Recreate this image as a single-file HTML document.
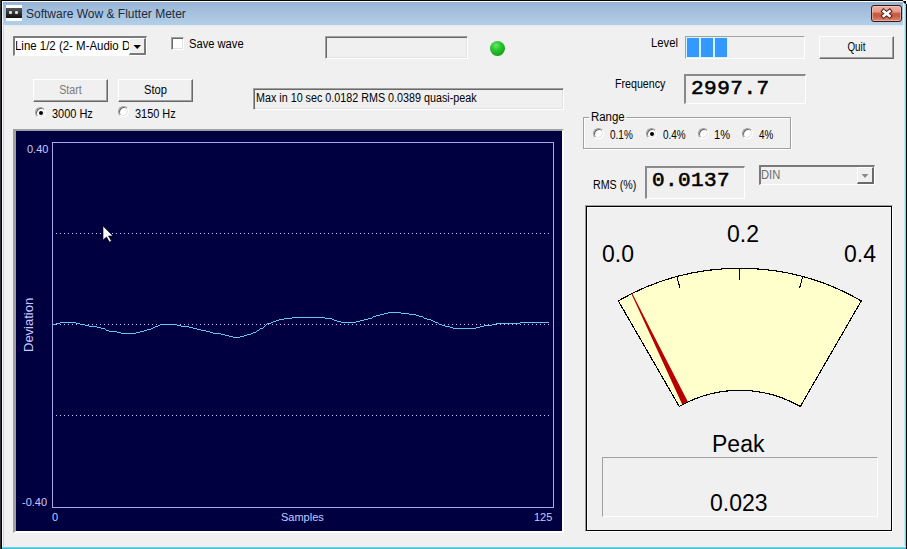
<!DOCTYPE html>
<html><head><meta charset="utf-8">
<style>
*{box-sizing:border-box;margin:0;padding:0}
html,body{width:907px;height:549px;overflow:hidden;background:#f0f0f0}
body{position:relative;font-family:"Liberation Sans",sans-serif;font-size:11px;color:#000}
.a{position:absolute}
.t{position:absolute;white-space:nowrap;line-height:1}
.sunk{position:absolute;border-top:1px solid #a0a0a0;border-left:1px solid #a0a0a0;border-bottom:1px solid #fff;border-right:1px solid #fff}
.sunk2{position:absolute;border-top:1px solid #a0a0a0;border-left:1px solid #a0a0a0;border-bottom:1px solid #fff;border-right:1px solid #fff;box-shadow:inset 1px 1px 0 #696969,inset -1px -1px 0 #e3e3e3}
.btn{position:absolute;width:75px;height:23px;background:#f0f0f0;border-top:1px solid #fff;border-left:1px solid #fff;border-right:1px solid #696969;border-bottom:1px solid #696969;box-shadow:inset -1px -1px 0 #a0a0a0}
.btn span{position:absolute;left:0;right:0;text-align:center;top:4px;line-height:1}
.radio{position:absolute;width:11px;height:11px;border-radius:50%;background:#fff;border:1px solid;border-color:#a0a0a0 #fff #fff #a0a0a0;box-shadow:inset 1px 1px 0 #696969, inset -1px -1px 0 #e3e3e3}
.radio.on::after{content:"";position:absolute;left:3px;top:3px;width:4px;height:4px;border-radius:50%;background:#000}
</style></head><body>
<!-- window frame -->
<div class="a" style="left:0;top:0;width:907px;height:1px;background:#000"></div>
<div class="a" style="left:0;top:0;width:1px;height:549px;background:#333"></div>
<div class="a" style="left:1px;top:0;width:1px;height:549px;background:#000"></div>
<div class="a" style="left:2px;top:1px;width:1px;height:548px;background:#f4faff"></div>
<div class="a" style="left:3px;top:25px;width:1px;height:524px;background:#c8d4e4"></div>
<div class="a" style="left:2px;top:1px;width:903px;height:1px;background:#fff"></div>
<div class="a" style="left:3px;top:2px;width:900px;height:23px;background:linear-gradient(180deg,#97b3d3 0,#a0bcdb 6px,#b2cde6 22px,#b6d2ea 23px)"></div>
<div class="a" style="left:3px;top:25px;width:900px;height:1px;background:#e2ebf5"></div><div class="a" style="left:4px;top:26px;width:899px;height:1px;background:#ebeff4"></div>
<div class="a" style="left:903px;top:1px;width:1px;height:548px;background:#e6f4fa"></div>
<div class="a" style="left:904px;top:1px;width:1px;height:548px;background:#c0e8f8"></div>
<div class="a" style="left:905px;top:1px;width:1px;height:548px;background:#8ccfe8"></div>
<div class="a" style="left:906px;top:0;width:1px;height:549px;background:#000"></div>
<div class="a" style="left:2px;top:546px;width:904px;height:1px;background:#e8f0f8"></div>
<div class="a" style="left:2px;top:547px;width:904px;height:1px;background:#80cce0"></div>
<div class="a" style="left:2px;top:548px;width:904px;height:1px;background:#3cc0d8"></div>
<div class="a" style="left:903px;top:0;width:4px;height:4px;background:#000;border-radius:0 0 0 4px;box-shadow:-1px 1px 0 #fff inset"></div>

<!-- title -->
<div class="a" style="left:6px;top:5px;width:16px;height:16px;background:#fff"></div>
<div class="a" style="left:6px;top:8px;width:16px;height:10px;background:linear-gradient(180deg,#555,#111)"></div>
<div class="a" style="left:9px;top:11px;width:3px;height:3px;background:#ddd;border-radius:1px"></div>
<div class="a" style="left:15px;top:11px;width:3px;height:3px;background:#ddd;border-radius:1px"></div>
<div class="t" style="left:26px;top:8px;font-size:12px;color:#1b2a3c">Software Wow &amp; Flutter Meter</div>

<!-- close button -->
<div class="a" style="left:871px;top:5px;width:31px;height:17px;border:1px solid #3a1814;border-radius:3px;background:linear-gradient(180deg,#eeb0a2 0,#e39a8a 6px,#cf5e48 7px,#c85a42 10px,#dc8870 15px);box-shadow:inset 0 0 0 1px rgba(255,220,210,.45)"></div>
<svg class="a" style="left:871px;top:5px" width="31" height="17"><path d="M12.6 6.2 L18.6 11 M18.6 6.2 L12.6 11" stroke="#4a2018" stroke-width="4.4" stroke-linecap="square"/><path d="M12.6 6.2 L18.6 11 M18.6 6.2 L12.6 11" stroke="#fff" stroke-width="2.5" stroke-linecap="square"/></svg>

<!-- combo -->
<div class="a" style="left:13px;top:36px;width:134px;height:20px;background:#fff;border-top:2px solid #7d7d7d;border-left:2px solid #7d7d7d;border-bottom:1px solid #fff;border-right:1px solid #fff"></div>
<div class="a" style="left:16px;top:41px;width:113px;height:12px;overflow:hidden"><div class="t" style="left:-0.9px;top:-1px;font-size:12px;transform-origin:0 0;transform:scaleX(0.954)">Line 1/2 (2- M-Audio Device</div></div>
<div class="a" style="left:129px;top:38px;width:17px;height:17px;background:#f0f0f0;border-left:1px solid #fff;border-top:1px solid #fff;border-right:2px solid #7a7a7a;border-bottom:2px solid #7a7a7a"></div>
<svg class="a" style="left:129px;top:38px" width="16" height="17"><path d="M4.5 7 L12 7 L8.25 11 Z" fill="#000"/></svg>

<!-- save wave -->
<div class="a" style="left:171px;top:37px;width:13px;height:13px;background:#fff;border-top:1px solid #a0a0a0;border-left:1px solid #a0a0a0;border-bottom:1px solid #fff;border-right:1px solid #fff;box-shadow:inset 1px 1px 0 #696969,inset -1px -1px 0 #e3e3e3"></div>
<div class="t" style="left:189.1px;top:38px;font-size:12px;transform-origin:0 0;transform:scaleX(0.930)">Save wave</div>

<div class="sunk2" style="left:325px;top:36px;width:143px;height:23px"></div>
<!-- LED -->
<div class="a" style="left:490px;top:41px;width:15px;height:15px;border-radius:50%;background:radial-gradient(circle at 40% 30%,#6ee86e 0,#28c830 35%,#14a01c 75%,#087010 100%)"></div>

<!-- Level -->
<div class="t" style="left:651.1px;top:37px;font-size:12px;transform-origin:0 0;transform:scaleX(0.940)">Level</div>
<div class="sunk" style="left:685px;top:36px;width:120px;height:23px"></div>
<div class="a" style="left:687px;top:38px;width:12px;height:19px;background:#3399ff;box-shadow:0 0 0 1px #d4f4ff"></div>
<div class="a" style="left:701px;top:38px;width:12px;height:19px;background:#3399ff;box-shadow:0 0 0 1px #d4f4ff"></div>
<div class="a" style="left:715px;top:38px;width:12px;height:19px;background:#3399ff;box-shadow:0 0 0 1px #d4f4ff"></div>

<div class="btn" style="left:819px;top:36px"><span style="font-size:12px;top:4px;transform:scaleX(0.818)">Quit</span></div>
<div class="btn" style="left:33px;top:79px;color:#7a7a7a"><span style="font-size:12px;top:4px;transform:scaleX(0.892)">Start</span></div>
<div class="btn" style="left:118px;top:79px"><span style="font-size:12px;top:4px;transform:scaleX(0.93)">Stop</span></div>

<div class="radio on" style="left:35px;top:107px"></div>
<div class="t" style="left:51.9px;top:108px;font-size:12px;transform-origin:0 0;transform:scaleX(0.914)">3000 Hz</div>
<div class="radio" style="left:118px;top:106px"></div>
<div class="t" style="left:134.8px;top:108px;font-size:12px;transform-origin:0 0;transform:scaleX(0.909)">3150 Hz</div>

<div class="sunk2" style="left:253px;top:88px;width:311px;height:22px"></div>
<div class="t" style="left:255.7px;top:92px;font-size:12px;transform-origin:0 0;transform:scaleX(0.896)">Max in 10 sec 0.0182 RMS 0.0389 quasi-peak</div>

<!-- frequency -->
<div class="t" style="left:614.7px;top:78px;font-size:12px;transform-origin:0 0;transform:scaleX(0.888)">Frequency</div>
<div class="sunk" style="left:684px;top:74px;width:122px;height:30px;border-top-width:2px;border-left-width:2px;border-top-color:#8a8a8a;border-left-color:#8a8a8a"></div>
<div class="t" style="left:691px;top:78px;font-family:'Liberation Mono',monospace;font-weight:normal;-webkit-text-stroke:0.6px #000;font-size:21px;letter-spacing:0.5px">2997.7</div>

<!-- range -->
<div class="a" style="left:583px;top:117px;width:208px;height:32px;border:1px solid #a0a0a0;box-shadow:1px 1px 0 #fff inset, 1px 1px 0 #fff"></div>
<div class="t" style="left:589.1px;top:111px;background:#f0f0f0;padding:0 2px;font-size:12px;transform-origin:0 0;transform:scaleX(0.956)">Range</div>
<div class="radio" style="left:593px;top:128px"></div><div class="t" style="left:609.5px;top:129px;font-size:12px;transform-origin:0 0;transform:scaleX(0.833)">0.1%</div>
<div class="radio on" style="left:646px;top:128px"></div><div class="t" style="left:662.7px;top:129px;font-size:12px;transform-origin:0 0;transform:scaleX(0.830)">0.4%</div>
<div class="radio" style="left:698px;top:128px"></div><div class="t" style="left:714.1px;top:129px;font-size:12px;transform-origin:0 0;transform:scaleX(0.925)">1%</div>
<div class="radio" style="left:742px;top:128px"></div><div class="t" style="left:758.5px;top:129px;font-size:12px;transform-origin:0 0;transform:scaleX(0.824)">4%</div>

<!-- RMS -->
<div class="t" style="left:593.1px;top:179px;font-size:12px;transform-origin:0 0;transform:scaleX(0.889)">RMS (%)</div>
<div class="sunk" style="left:645px;top:166px;width:100px;height:33px;border-top-width:2px;border-left-width:2px;border-top-color:#8a8a8a;border-left-color:#8a8a8a"></div>
<div class="t" style="left:652px;top:170px;font-family:'Liberation Mono',monospace;font-weight:normal;-webkit-text-stroke:0.6px #000;font-size:21px;letter-spacing:0.4px">0.0137</div>

<!-- DIN combo (disabled) -->
<div class="a" style="left:759px;top:165px;width:116px;height:20px;background:#f0f0f0;border-top:2px solid #7a7a7a;border-left:2px solid #7a7a7a;border-bottom:1px solid #fff;border-right:1px solid #fff;box-shadow:inset 0 0 0 0 #000"></div>
<div class="t" style="left:761.4px;top:169px;color:#6d6d6d;font-size:12px;transform-origin:0 0;transform:scaleX(0.932)">DIN</div>
<div class="a" style="left:857px;top:167px;width:17px;height:17px;background:#f0f0f0;border-left:1px solid #fff;border-top:1px solid #fff;border-right:2px solid #6a6a6a;border-bottom:2px solid #6a6a6a"></div>
<svg class="a" style="left:857px;top:167px" width="16" height="17"><path d="M4.5 7 L11.5 7 L8 11 Z" fill="#8a8a8a"/></svg>

<!-- chart -->
<div class="a" style="left:13px;top:129px;width:551px;height:404px;border-top:2px solid #a0a0a0;border-left:3px solid #a0a0a0;border-bottom:2px solid #fff;border-right:2px solid #fff;background:#000040"></div>

<!-- meter panel -->
<div class="a" style="left:585px;top:205px;width:308px;height:327px;border-top:1px solid #a0a0a0;border-left:1px solid #a0a0a0;border-bottom:1px solid #fff;border-right:1px solid #fff"></div>
<div class="a" style="left:586px;top:206px;width:306px;height:325px;border:1px solid #000;box-shadow:inset 1px 1px 0 #fff"></div>

<!-- chart svg -->
<svg class="a" style="left:0;top:0" width="907" height="549" shape-rendering="crispEdges">
<rect x="52.5" y="142.5" width="501" height="365" fill="none" stroke="#a8a8f0" stroke-width="1"/>
<path d="M56 233.5H550M56 324.5H550M56 415.5H550" stroke="#c8c8ff" stroke-width="1" stroke-dasharray="1 3"/>
<path d="M52 324h4v1h-4zM56 323h4v1h-4zM60 322h16v1h-16zM76 323h4v1h-4zM80 324h5v1h-5zM85 325h4v1h-4zM89 326h8v1h-8zM97 327h4v1h-4zM101 328h4v1h-4zM105 329h1v1h-1zM106 330h3v1h-3zM109 331h8v1h-8zM117 332h4v1h-4zM121 333h15v1h-15zM136 332h4v1h-4zM140 331h4v1h-4zM144 330h3v1h-3zM147 329h4v1h-4zM151 328h2v1h-2zM153 327h2v1h-2zM155 326h3v1h-3zM158 325h2v1h-2zM160 324h17v1h-17zM177 325h4v1h-4zM181 326h8v1h-8zM189 327h4v1h-4zM193 328h4v1h-4zM197 329h4v1h-4zM201 330h5v1h-5zM206 331h4v1h-4zM210 332h3v1h-3zM213 333h8v1h-8zM221 334h4v1h-4zM225 335h4v1h-4zM229 336h4v1h-4zM233 337h7v1h-7zM240 336h4v1h-4zM244 335h3v1h-3zM247 334h4v1h-4zM251 333h2v1h-2zM253 332h3v1h-3zM256 331h1v1h-1zM257 330h2v1h-2zM259 329h1v1h-1zM260 328h3v1h-3zM263 327h1v1h-1zM264 326h1v1h-1zM265 325h1v1h-1zM266 324h1v1h-1zM267 323h4v1h-4zM271 322h2v1h-2zM273 321h3v1h-3zM276 320h3v1h-3zM279 319h5v1h-5zM284 318h8v1h-8zM292 317h33v1h-33zM325 318h7v1h-7zM332 319h2v1h-2zM334 320h3v1h-3zM337 321h4v1h-4zM341 322h15v1h-15zM356 321h4v1h-4zM360 320h4v1h-4zM364 319h4v1h-4zM368 318h4v1h-4zM372 317h1v1h-1zM373 316h3v1h-3zM376 315h4v1h-4zM380 314h4v1h-4zM384 313h4v1h-4zM388 312h13v1h-13zM401 313h8v1h-8zM409 314h7v1h-7zM416 315h3v1h-3zM419 316h4v1h-4zM423 317h1v1h-1zM424 318h3v1h-3zM427 319h4v1h-4zM431 320h2v1h-2zM433 321h2v1h-2zM435 322h3v1h-3zM438 323h1v1h-1zM439 324h3v1h-3zM442 325h3v1h-3zM445 326h5v1h-5zM450 327h3v1h-3zM453 328h23v1h-23zM476 327h4v1h-4zM480 326h4v1h-4zM484 325h8v1h-8zM492 324h4v1h-4zM496 323h24v1h-24zM520 322h29v1h-29z" fill="#64c6f0"/>
</svg>
<div class="t" style="left:27px;top:144px;color:#c8c8ff">0.40</div>
<div class="t" style="left:22px;top:497px;color:#c8c8ff">-0.40</div>
<div class="t" style="left:52px;top:512px;color:#c8c8ff">0</div>
<div class="t" style="left:281px;top:512px;color:#c8c8ff">Samples</div>
<div class="t" style="left:534px;top:512px;color:#c8c8ff">125</div>
<div class="t" style="left:22px;top:352px;font-size:13px;color:#c8c8ff;transform-origin:0 0;transform:rotate(-90deg)">Deviation</div>
<!-- cursor -->
<svg class="a" style="left:0;top:0" width="907" height="549"><path d="M103 226 L103 240 L106.5 237 L109.5 242 L111.5 241 L108.5 236 L113 236 Z" fill="#fff" stroke="#000" stroke-width="0.6"/></svg>

<!-- meter -->
<svg class="a" style="left:0;top:0" width="907" height="549">
<defs><clipPath id="sec"><path d="M618.30,300.86 A243,243 0 0 1 861.30,300.86 L800.30,406.51 A121,121 0 0 0 679.30,406.51 Z"/></clipPath></defs>
<path d="M618.30,300.86 A243,243 0 0 1 861.30,300.86 L800.30,406.51 A121,121 0 0 0 679.30,406.51 Z" fill="#ffffcc" stroke="none"/>
<polygon clip-path="url(#sec)" points="631.34,291.62 652.34,332.63 671.17,369.29 691.15,408.10 685.21,410.98 667.03,371.31 649.82,333.85 630.54,292.02" fill="#b80000"/>
<path d="M618.30,300.86 A243,243 0 0 1 861.30,300.86 L800.30,406.51 A121,121 0 0 0 679.30,406.51 Z" fill="none" stroke="#000" stroke-width="1.15" shape-rendering="crispEdges"/>
<path d="M676.91,276.58 L680.01,288.17 M739.80,268.30 L739.80,280.30 M802.69,276.58 L799.59,288.17" stroke="#000" stroke-width="1" shape-rendering="crispEdges"/>
</svg>
<div class="t" style="left:602px;top:243px;font-size:23px">0.0</div>
<div class="t" style="left:727px;top:223px;font-size:23px">0.2</div>
<div class="t" style="left:844px;top:243px;font-size:23px">0.4</div>
<div class="t" style="left:712px;top:433px;font-size:23px">Peak</div>
<div class="a" style="left:602px;top:457px;width:276px;height:60px;border-top:1px solid #a0a0a0;border-left:1px solid #a0a0a0;border-bottom:1px solid #fff;border-right:1px solid #fff"></div>
<div class="t" style="left:710px;top:492px;font-size:23px">0.023</div>
</body></html>
